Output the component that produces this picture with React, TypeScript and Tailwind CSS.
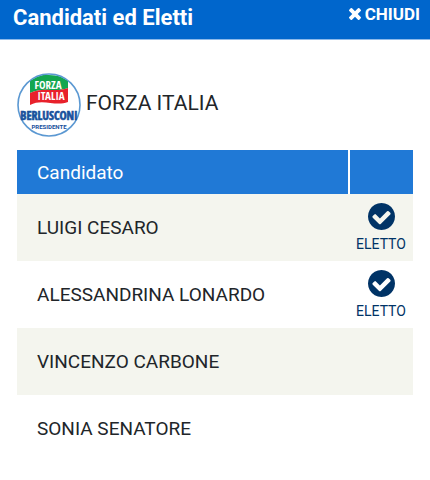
import React from 'react';

interface Candidate {
  name: string;
  elected: boolean;
}

const candidates: Candidate[] = [
  { name: 'LUIGI CESARO', elected: true },
  { name: 'ALESSANDRINA LONARDO', elected: true },
  { name: 'VINCENZO CARBONE', elected: false },
  { name: 'SONIA SENATORE', elected: false },
];

function CloseIcon() {
  return (
    <svg viewBox="302 238 1188 1188" className="h-3 w-3" fill="currentColor" aria-hidden="true">
      <path d="M1490 1194q0 40-28 68l-136 136q-28 28-68 28t-68-28l-294-294-294 294q-28 28-68 28t-68-28l-136-136q-28-28-28-68t28-68l294-294-294-294q-28-28-28-68t28-68l136-136q28-28 68-28t68 28l294 294 294-294q28-28 68-28t68 28l136 136q28 28 28 68t-28 68l-294 294 294 294q28 28 28 68z" />
    </svg>
  );
}

function CheckIcon() {
  return (
    <svg viewBox="128 128 1536 1536" className="h-[27px] w-[27px]" fill="currentColor" aria-hidden="true">
      <path d="M1412 734q0-28-18-46l-91-90q-19-19-45-19t-45 19l-408 407-226-226q-19-19-45-19t-45 19l-91 90q-18 18-18 46 0 27 18 45l362 362q19 19 45 19 27 0 46-19l543-543q18-18 18-45zm252 162q0 209-103 385.5t-279.5 279.5-385.5 103-385.5-103-279.5-279.5-103-385.5 103-385.5 279.5-279.5 385.5-103 385.5 103 279.5 279.5 103 385.5z" />
    </svg>
  );
}

function PartyLogo() {
  return (
    <svg viewBox="0 0 64 64" className="h-16 w-16 shrink-0" role="img" aria-label="Forza Italia">
      <defs>
        <clipPath id="disc">
          <circle cx="32" cy="32" r="30.5" />
        </clipPath>
      </defs>
      <circle cx="32" cy="32" r="31" fill="#fff" />
      <g clipPath="url(#disc)">
        <path d="M13 4 C25 -2 38 6 51 0 V15 C38 20 26 13 13 20 Z" fill="#13a650" />
        <path d="M13 20 C26 13 38 20 51 15 V29 C38 34 26 25 13 32 Z" fill="#e8212b" />
      </g>
      <circle cx="32" cy="32" r="31" fill="none" stroke="#5b98d2" strokeWidth="1.6" />
      <g fontFamily="'Liberation Sans Narrow', 'Open Sans Condensed', 'Roboto Condensed', sans-serif" fontWeight="bold" textAnchor="middle">
        <text fill="#fff" fontSize="11">
          <tspan x="31" y="16">FORZA</tspan>
          <tspan x="34" y="27">ITALIA</tspan>
        </text>
        <text x="32" y="47" fontSize="12" fill="#17509c" stroke="#17509c" strokeWidth="0.6">
          BERLUSCONI
        </text>
        <text x="32" y="56" fontSize="6" fontFamily="Roboto, sans-serif" fill="#17509c">PRESIDENTE</text>
      </g>
    </svg>
  );
}

export default function App() {
  return (
    <div className="min-h-screen bg-white font-['Roboto',sans-serif] text-[#212529]">
      <header className="flex h-10 items-start justify-between border-b border-[#8dbaea] bg-[#0066cc] pl-[13px] pr-[10px] text-white">
        <h1 className="pt-1 text-[22px] leading-7 font-bold">Candidati ed Eletti</h1>
        <button type="button" className="flex items-center gap-1 pt-1 text-[17px] leading-5 font-bold">
          <CloseIcon />
          CHIUDI
        </button>
      </header>

      <main className="pt-[33px] pr-[17px] pl-[17px]">
        <div className="flex items-center gap-1">
          <PartyLogo />
          <h2 className="pb-1 pl-px text-[21px] leading-8">FORZA ITALIA</h2>
        </div>

        <table className="mt-[13px] w-full table-fixed border-collapse">
          <thead>
            <tr className="h-11 bg-[#2079d6] text-[19px] text-white">
              <th scope="col" className="pt-0.5 pl-5 text-left font-normal">Candidato</th>
              <th scope="col" className="w-16 border-l-2 border-white" aria-label="Esito" />
            </tr>
          </thead>
          <tbody>
            {candidates.map((candidate) => (
              <tr key={candidate.name} className="h-[67px] odd:bg-[#f4f5ee]">
                <td className="pt-0.5 pl-5 text-[19px]">{candidate.name}</td>
                <td className="pt-0.5 text-[#003366]">
                  {candidate.elected && (
                    <div className="flex flex-col items-center gap-1">
                      <CheckIcon />
                      <span className="text-sm leading-5">ELETTO</span>
                    </div>
                  )}
                </td>
              </tr>
            ))}
          </tbody>
        </table>
      </main>
    </div>
  );
}
